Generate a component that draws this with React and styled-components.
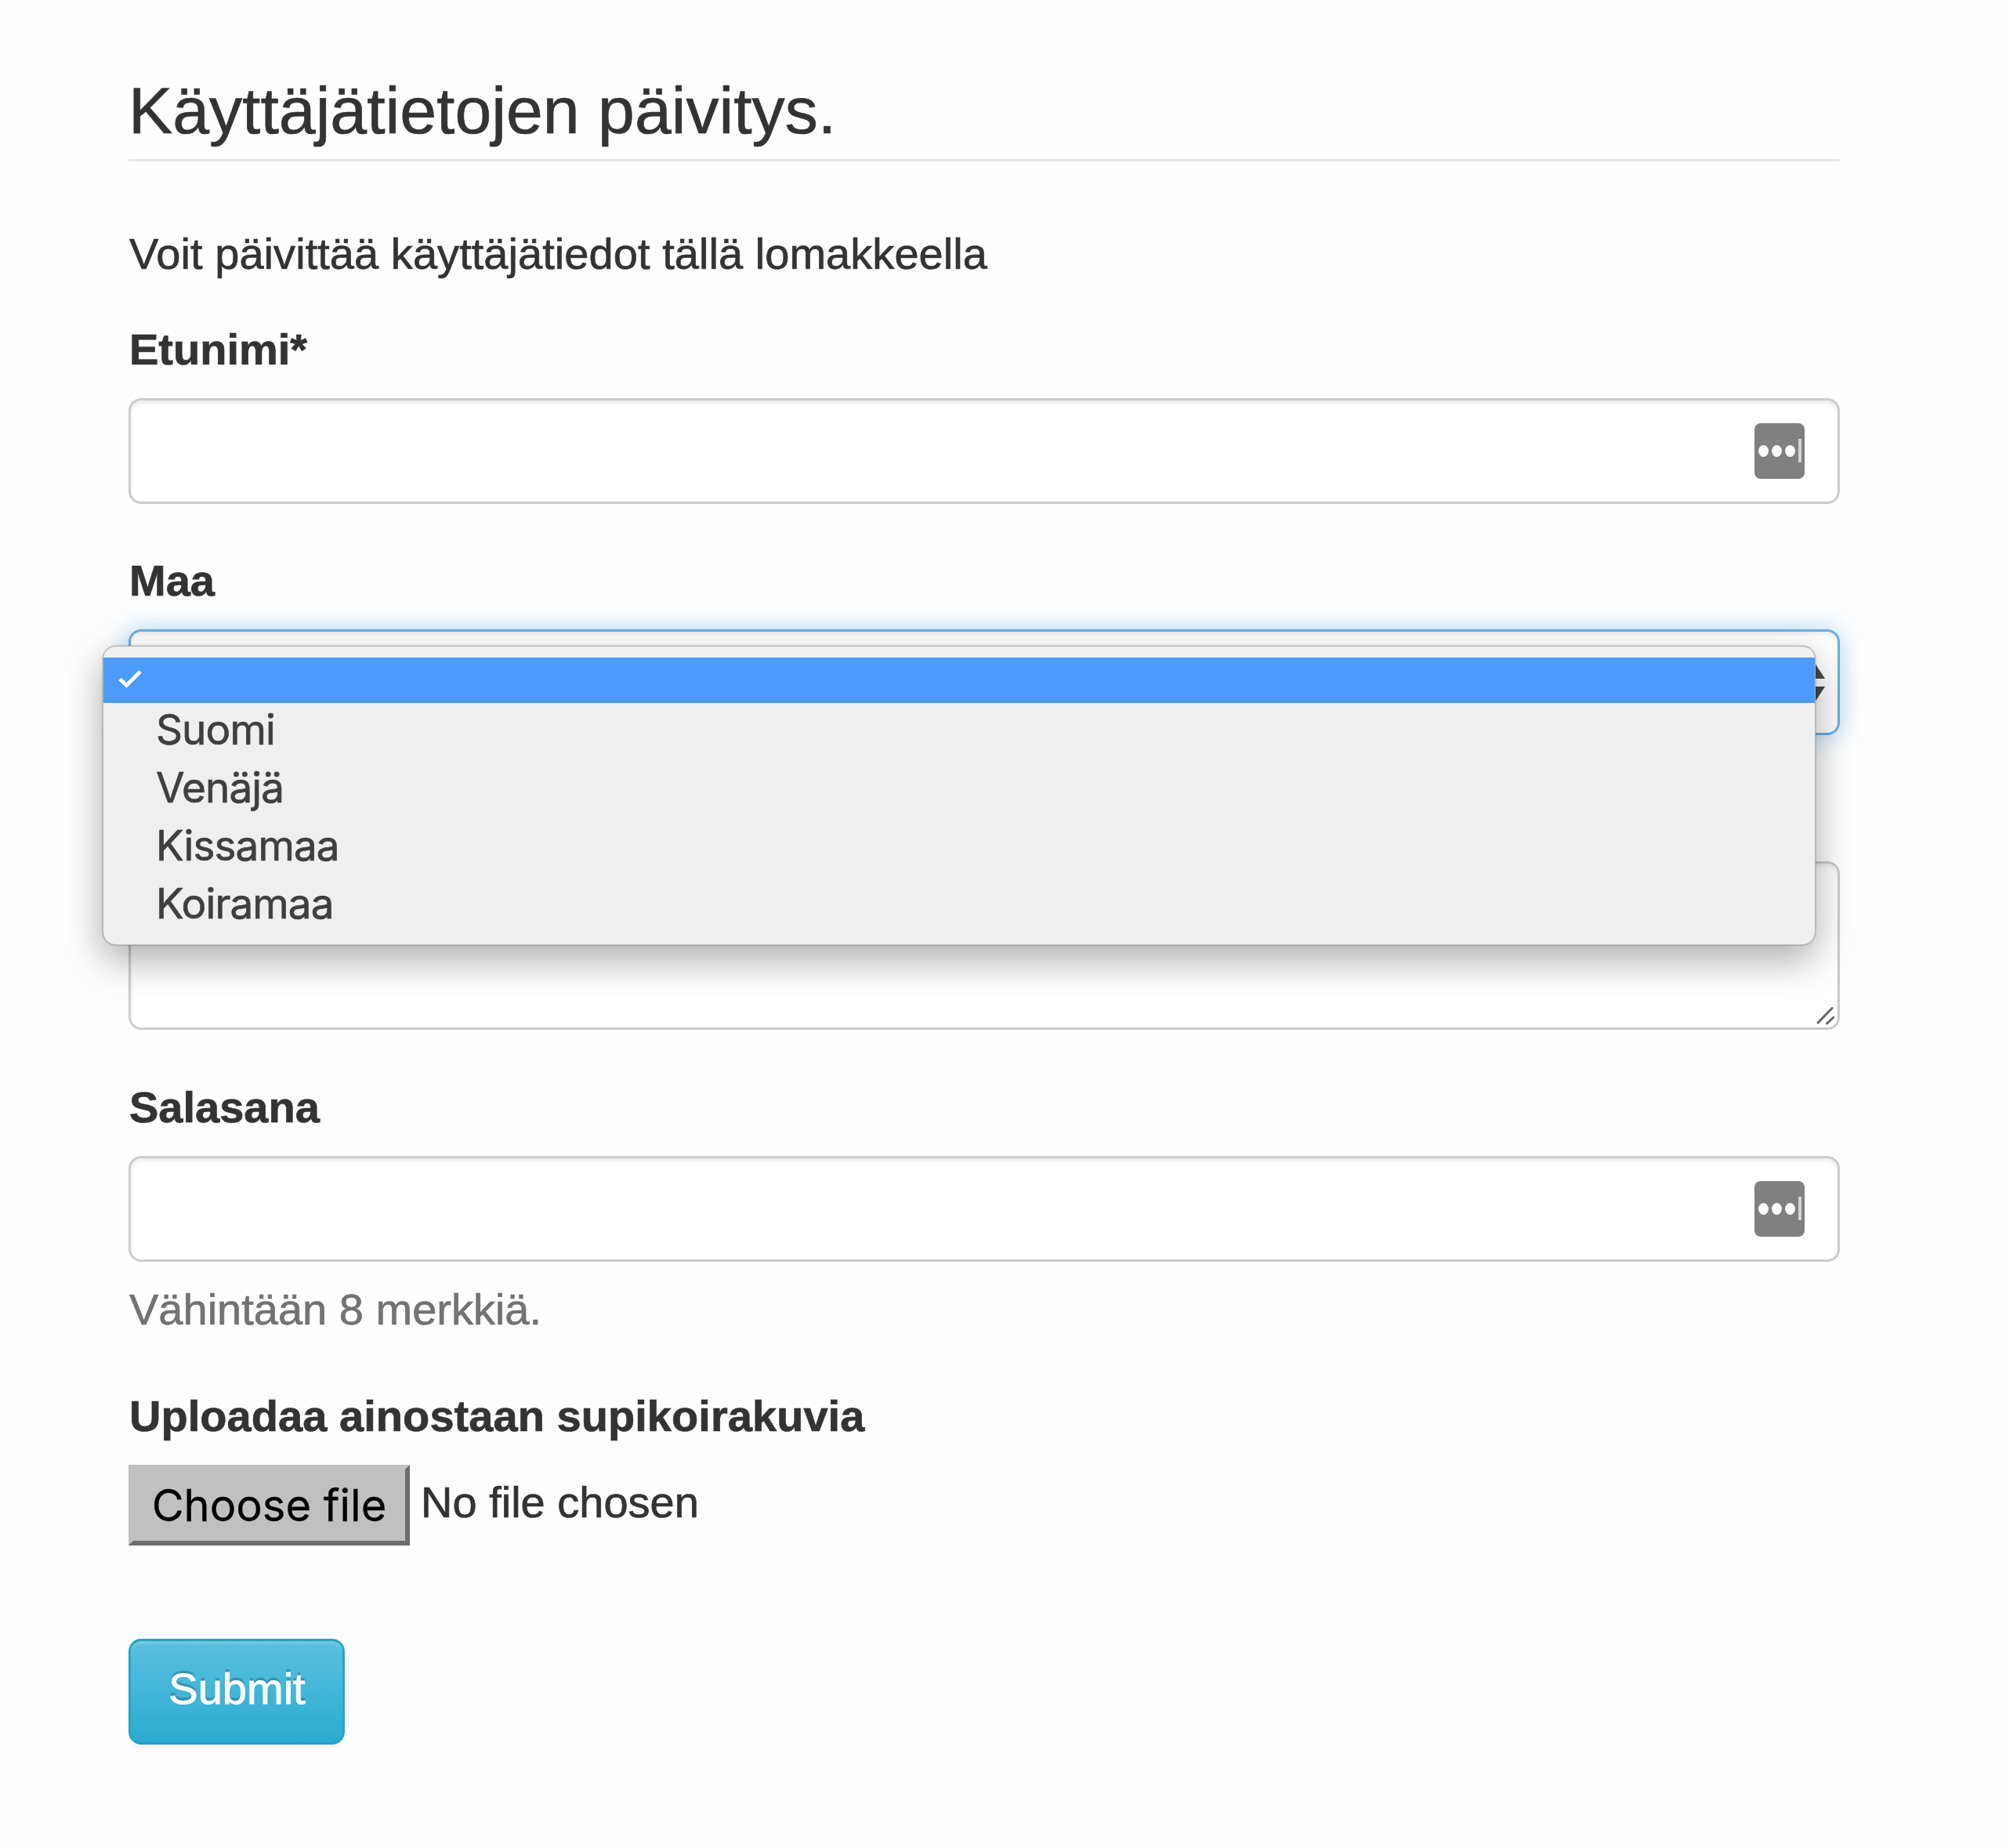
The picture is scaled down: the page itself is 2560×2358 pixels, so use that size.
import React from 'react';
import styled, { createGlobalStyle } from 'styled-components';

const GlobalStyle = createGlobalStyle`
  * { box-sizing: border-box; }
  body { margin: 0; background: #fefefe; }
`;

const Page = styled.main`
  width: 2560px;
  height: 2358px;
  padding: 95px 212px 0 164px;
  overflow: hidden;
  font-family: 'Liberation Sans', Arial, sans-serif;
  font-size: 56px;
  line-height: 80px;
  color: #333;
  -webkit-text-stroke: 0.7px currentColor;
`;

const Form = styled.form`
  display: flex;
  flex-direction: column;
`;

const Legend = styled.h1`
  margin: 0 0 78px;
  height: 111px;
  padding-top: 4px;
  border-bottom: 3px solid #e5e5e5;
  font-size: 84.2px;
  font-weight: 400;
  line-height: 84px;
`;

const Intro = styled.p`
  margin: 0;
  padding-left: 1px;
  height: 122px;
  line-height: 80px;
  letter-spacing: 0.05px;
`;

const Field = styled.div`
  position: relative;
  display: flex;
  flex-direction: column;
  height: ${(p) => p.$height}px;
`;

const Label = styled.label`
  height: 102px;
  padding-left: 1px;
  font-weight: 700;
  line-height: 80px;
  letter-spacing: ${(p) => p.$tracking || 0}px;
`;

const Control = styled.div`
  flex: none;
  display: flex;
  align-items: center;
  justify-content: flex-end;
  height: ${(p) => p.$height || 135}px;
  padding-right: ${(p) => p.$inset || 42}px;
  border: 3px solid ${(p) => (p.$focused ? '#66afe9' : '#ccc')};
  border-radius: 16px;
  background: #fff;
  box-shadow: ${(p) =>
    p.$focused
      ? 'inset 0 4px 4px rgba(0,0,0,.075), 0 0 32px rgba(102,175,233,.5)'
      : 'inset 0 4px 4px rgba(0,0,0,.075)'};
`;

const TextArea = styled(Control)`
  align-items: flex-end;
  padding: 0 4px 3px 0;
`;

const Help = styled.p`
  margin: 21px 0 0;
  padding-left: 1px;
  color: #737373;
`;

const Menu = styled.div`
  position: absolute;
  z-index: 2;
  top: 123px;
  left: -33px;
  width: 2186px;
  height: 382px;
  padding-top: 14px;
  border: 1px solid #b5b5b5;
  border-radius: 17px;
  background: #efefef;
  box-shadow: 0 0 2px rgba(0,0,0,.4), 0 18px 50px rgba(0,0,0,.34);
  font-family: Inter, sans-serif;
  font-size: 53px;
  color: #3f3f3f;
`;

const Selected = styled.div`
  display: flex;
  height: 58px;
  padding: 16px 0 0 19px;
  background: #4c9afa;
`;

const Options = styled.div`
  margin-top: -3px;
`;

const Option = styled.div`
  height: 74px;
  padding-left: 67px;
  line-height: 74px;
  letter-spacing: -0.9px;
`;

const FileRow = styled.div`
  display: flex;
  height: 103px;
`;

const FileButton = styled.button`
  width: 359px;
  height: 103px;
  padding: 0;
  border: 6px solid;
  border-color: #c0c0c0 #6d6d6d #6d6d6d #c0c0c0;
  background: #c0c0c0;
  font-family: Inter, sans-serif;
  font-size: 56px;
  line-height: 88px;
  color: #000;
  -webkit-text-stroke: 0.3px currentColor;
`;

const FileName = styled.span`
  margin-left: 14px;
  padding-top: 8px;
`;

const Submit = styled.button`
  width: 276px;
  height: 135px;
  margin-top: 119px;
  padding: 0 0 8px 1px;
  border: 3px solid;
  border-color: #2fa0ba #2aa3c8 #28a1c5;
  border-radius: 16px;
  background: linear-gradient(#5bc0de, #2aabd2);
  box-shadow: inset 0 4px 0 rgba(255,255,255,.12), 0 4px 4px rgba(0,0,0,.05);
  font-family: inherit;
  font-size: 56px;
  color: #fff;
  text-shadow: 0 -4px 0 rgba(0,0,0,.2);
  -webkit-text-stroke: 0.9px currentColor;
`;

const KeyIcon = () => (
  <svg width="64" height="71" viewBox="0 0 64 71">
    <rect width="64" height="71" rx="8" fill="#808080" />
    <ellipse cx="11.5" cy="35.5" rx="6.4" ry="7.5" fill="#fff" />
    <ellipse cx="28.5" cy="35.5" rx="6.4" ry="7.5" fill="#fff" />
    <ellipse cx="45.5" cy="35.5" rx="6.4" ry="7.5" fill="#fff" />
    <rect x="56" y="20" width="4" height="30" fill="#d4d4d4" />
  </svg>
);

const Arrows = () => (
  <svg width="26" height="50" viewBox="0 0 26 50">
    <path d="M13 0L26 20H0zM0 30H26L13 50z" fill="#484848" />
  </svg>
);

const Grip = () => (
  <svg width="23" height="24" viewBox="0 0 23 24">
    <path d="M2 21L20 2.5M13.5 22L22 14" stroke="#666" strokeWidth="3" fill="none" strokeLinecap="round" />
  </svg>
);

const Check = () => (
  <svg width="30" height="23" viewBox="0 0 30 23">
    <path d="M2 11.5L10.5 19.5L28 2" stroke="#fff" strokeWidth="4.8" fill="none" />
  </svg>
);

export default function App() {
  return (
    <Page>
      <GlobalStyle />
      <Form>
        <Legend>Käyttäjätietojen päivitys.</Legend>
        <Intro>Voit päivittää käyttäjätiedot tällä lomakkeella</Intro>
        <Field $height={295}>
          <Label>Etunimi*</Label>
          <Control><KeyIcon /></Control>
        </Field>
        <Field $height={398}>
          <Label>Maa</Label>
          <Control $focused $inset={16}><Arrows /></Control>
          <Menu>
            <Selected><Check /></Selected>
            <Options>
              {['Suomi', 'Venäjä', 'Kissamaa', 'Koiramaa'].map((name) => (
                <Option key={name}>{name}</Option>
              ))}
            </Options>
          </Menu>
        </Field>
        <Field $height={274}>
          <TextArea $height={215}><Grip /></TextArea>
        </Field>
        <Field $height={394}>
          <Label>Salasana</Label>
          <Control><KeyIcon /></Control>
          <Help>Vähintään 8 merkkiä.</Help>
        </Field>
        <Label $tracking={0.05}>Uploadaa ainostaan supikoirakuvia</Label>
        <FileRow>
          <FileButton type="button">Choose file</FileButton>
          <FileName>No file chosen</FileName>
        </FileRow>
        <Submit type="button">Submit</Submit>
      </Form>
    </Page>
  );
}
